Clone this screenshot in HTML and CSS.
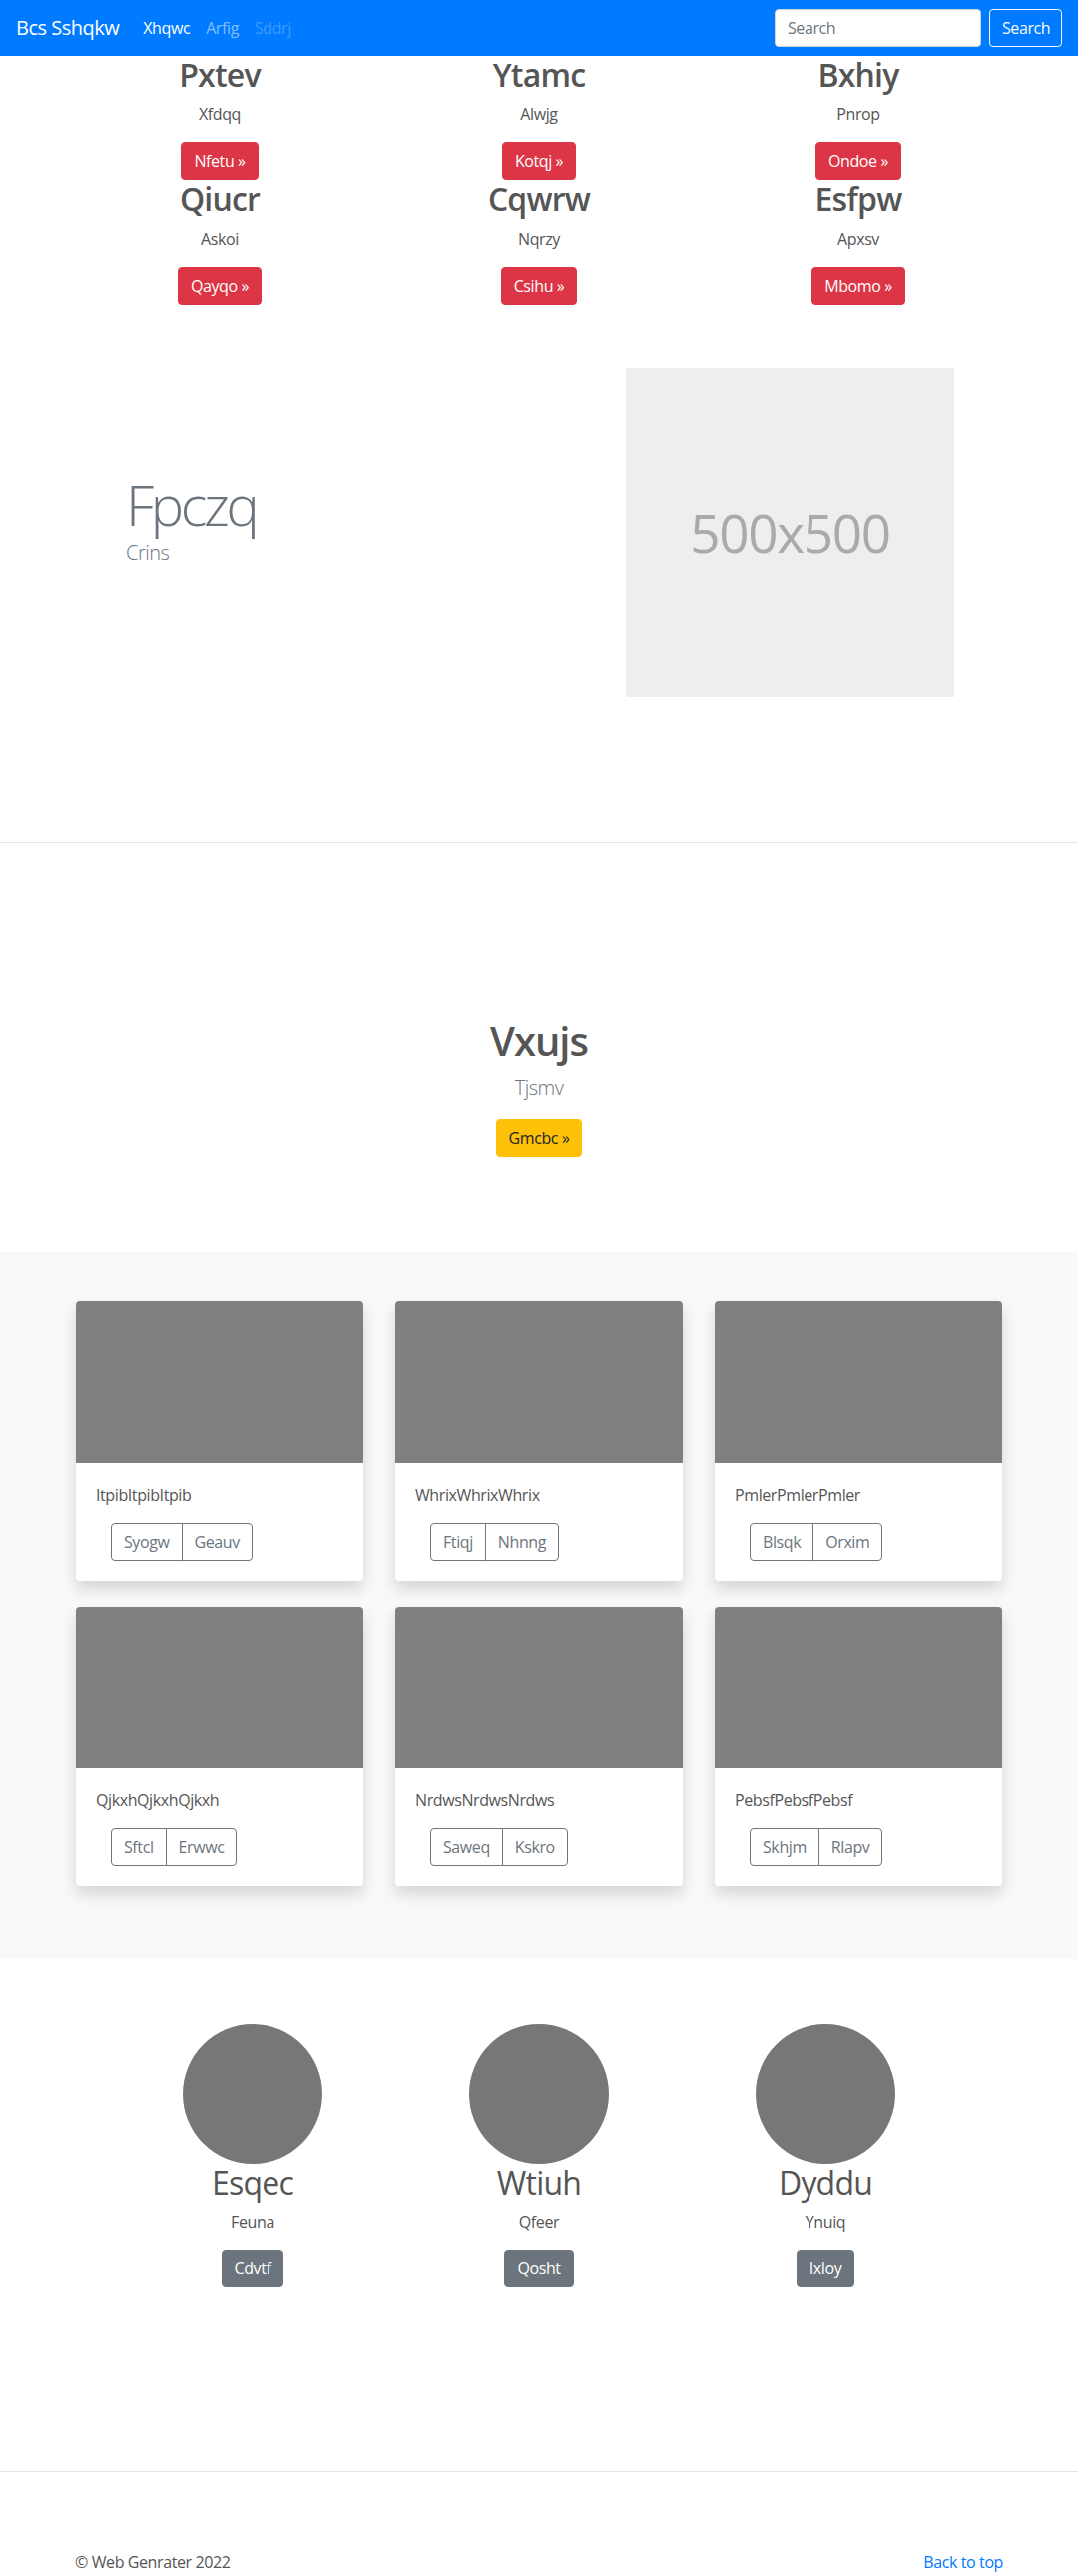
FILE: index.html
```html
<!DOCTYPE html>
<html lang="en">
<head>
<meta charset="utf-8">
<title>Bcs Sshqkw</title>
<link rel="stylesheet" href="styles.css">
</head>
<body>
<nav class="navbar">
  <a class="brand" href="#">Bcs Sshqkw</a>
  <ul class="nav-links">
    <li><a class="nav-link active" href="#">Xhqwc</a></li>
    <li><a class="nav-link" href="#">Arfig</a></li>
    <li><a class="nav-link disabled" href="#">Sddrj</a></li>
  </ul>
  <form class="search-form">
    <input class="search-input" type="text" placeholder="Search">
    <button class="btn btn-outline-light" type="button">Search</button>
  </form>
</nav>

<section class="features">
  <div class="feature"><h2>Pxtev</h2><p>Xfdqq</p><a class="btn btn-danger" href="#">Nfetu &raquo;</a></div>
  <div class="feature"><h2>Ytamc</h2><p>Alwjg</p><a class="btn btn-danger" href="#">Kotqj &raquo;</a></div>
  <div class="feature"><h2>Bxhiy</h2><p>Pnrop</p><a class="btn btn-danger" href="#">Ondoe &raquo;</a></div>
  <div class="feature"><h2>Qiucr</h2><p>Askoi</p><a class="btn btn-danger" href="#">Qayqo &raquo;</a></div>
  <div class="feature"><h2>Cqwrw</h2><p>Nqrzy</p><a class="btn btn-danger" href="#">Csihu &raquo;</a></div>
  <div class="feature"><h2>Esfpw</h2><p>Apxsv</p><a class="btn btn-danger" href="#">Mbomo &raquo;</a></div>
</section>

<section class="hero">
  <div class="hero-text">
    <h1 class="display">Fpczq</h1>
    <p class="lead muted">Crins</p>
  </div>
  <div class="placeholder">500x500</div>
</section>

<hr class="divider">

<section class="cta">
  <h1>Vxujs</h1>
  <p class="lead muted">Tjsmv</p>
  <a class="btn btn-warning" href="#">Gmcbc &raquo;</a>
</section>

<section class="album">
  <div class="cards">
    <div class="card"><div class="card-img"></div><div class="card-body"><p>ItpibItpibItpib</p><div class="btn-group"><a class="btn btn-outline" href="#">Syogw</a><a class="btn btn-outline" href="#">Geauv</a></div></div></div>
    <div class="card"><div class="card-img"></div><div class="card-body"><p>WhrixWhrixWhrix</p><div class="btn-group"><a class="btn btn-outline" href="#">Ftiqj</a><a class="btn btn-outline" href="#">Nhnng</a></div></div></div>
    <div class="card"><div class="card-img"></div><div class="card-body"><p>PmlerPmlerPmler</p><div class="btn-group"><a class="btn btn-outline" href="#">Blsqk</a><a class="btn btn-outline" href="#">Orxim</a></div></div></div>
    <div class="card"><div class="card-img"></div><div class="card-body"><p>QjkxhQjkxhQjkxh</p><div class="btn-group"><a class="btn btn-outline" href="#">Sftcl</a><a class="btn btn-outline" href="#">Erwwc</a></div></div></div>
    <div class="card"><div class="card-img"></div><div class="card-body"><p>NrdwsNrdwsNrdws</p><div class="btn-group"><a class="btn btn-outline" href="#">Saweq</a><a class="btn btn-outline" href="#">Kskro</a></div></div></div>
    <div class="card"><div class="card-img"></div><div class="card-body"><p>PebsfPebsfPebsf</p><div class="btn-group"><a class="btn btn-outline" href="#">Skhjm</a><a class="btn btn-outline" href="#">Rlapv</a></div></div></div>
  </div>
</section>

<section class="team">
  <div class="member"><div class="avatar"></div><h2>Esqec</h2><p>Feuna</p><a class="btn btn-secondary" href="#">Cdvtf</a></div>
  <div class="member"><div class="avatar"></div><h2>Wtiuh</h2><p>Qfeer</p><a class="btn btn-secondary" href="#">Qosht</a></div>
  <div class="member"><div class="avatar"></div><h2>Dyddu</h2><p>Ynuiq</p><a class="btn btn-secondary" href="#">Ixloy</a></div>
</section>

<hr class="divider">

<footer class="footer">
  <p>&copy; Web Genrater 2022</p>
  <a href="#">Back to top</a>
</footer>
</body>
</html>
```

FILE: styles.css
```css
* {
  box-sizing: border-box;
  letter-spacing: -0.025em;
}

html, body {
  margin: 0;
  padding: 0;
}

body {
  font-family: "Open Sans", "Noto Sans", "Liberation Sans", sans-serif;
  font-size: 16px;
  line-height: 1.5;
  color: #555;
  background: #fff;
}

a { text-decoration: none; }

h1, h2, p { margin: 0; }

/* Navbar */
.navbar {
  height: 56px;
  background: #007bff;
  display: flex;
  align-items: center;
  padding: 0 16px;
}

.brand {
  color: #fff;
  font-size: 20px;
  line-height: 30px;
  margin-right: 16px;
}

.nav-links {
  list-style: none;
  margin: 0;
  padding: 0;
  display: flex;
  flex: 1;
}

.nav-link {
  display: block;
  padding: 8px 8px;
  color: rgba(255, 255, 255, 0.5);
}

.nav-link.active { color: #fff; }
.nav-link.disabled { color: rgba(255, 255, 255, 0.25); }

.search-form {
  display: flex;
  align-items: center;
}

.search-input {
  width: 207px;
  height: 38px;
  padding: 6px 12px;
  border: 1px solid #ced4da;
  border-radius: 4px;
  font-family: inherit;
  font-size: 16px;
  color: #495057;
  margin-right: 8px;
}

.search-input::placeholder { color: #6c757d; }

/* Buttons */
.btn {
  display: inline-block;
  height: 38px;
  padding: 6px 12px;
  border: 1px solid transparent;
  border-radius: 4px;
  font-family: inherit;
  font-size: 16px;
  line-height: 24px;
  text-align: center;
  cursor: pointer;
  white-space: nowrap;
}

.btn-outline-light {
  background: transparent;
  border-color: #f8f9fa;
  color: #f8f9fa;
  width: 73px;
}

.btn-danger { background: #dc3545; border-color: #dc3545; color: #fff; }
.btn-warning { background: #ffc107; border-color: #ffc107; color: #212529; }
.btn-secondary { background: #6c757d; border-color: #6c757d; color: #fff; }
.btn-outline { background: #fff; border-color: #6c757d; color: #6c757d; }

/* Features */
.features {
  width: 960px;
  margin: 0 auto;
  display: grid;
  grid-template-columns: repeat(3, 1fr);
}

.feature {
  text-align: center;
  padding: 0 15px;
}

.feature h2 {
  font-size: 32px;
  font-weight: 600;
  line-height: 1.2;
  margin-bottom: 8px;
}

.feature p { margin-bottom: 16px; }

/* Hero */
.hero {
  width: 960px;
  margin: 0 auto;
  display: flex;
  align-items: flex-start;
  padding: 64px 0 145px;
}

.hero-text {
  flex: 1;
  padding-left: 66px;
  margin-top: 103px;
}

.display {
  font-size: 56px;
  font-weight: 300;
  line-height: 1.2;
  color: #6c757d;
  letter-spacing: -0.06em;
}

.lead {
  font-size: 20px;
  font-weight: 300;
  line-height: 1.5;
}

.muted { color: #6c757d; }

.placeholder {
  width: 329px;
  height: 329px;
  margin-right: 64px;
  background: #eee;
  color: #aaa;
  font-size: 53px;
  display: flex;
  align-items: center;
  justify-content: center;
}

.divider {
  margin: 0;
  border: 0;
  border-top: 1px solid rgba(0, 0, 0, 0.1);
}

/* CTA */
.cta {
  text-align: center;
  padding: 175px 0 95px;
}

.cta h1 {
  font-size: 40px;
  font-weight: 600;
  line-height: 1.2;
  margin-bottom: 8px;
}

.cta .lead { margin-bottom: 16px; }

/* Album */
.album {
  background: #f8f9fa;
  padding: 49px 0 73px;
}

.cards {
  display: grid;
  grid-template-columns: repeat(3, 288px);
  column-gap: 32px;
  row-gap: 26px;
  justify-content: center;
}

.card {
  background: #fff;
  border-radius: 4px;
  overflow: hidden;
  box-shadow: 0 8px 16px rgba(0, 0, 0, 0.15);
}

.card-img {
  height: 162px;
  background: #808080;
}

.card-body { padding: 20px; }

.card-body p { margin-bottom: 16px; }

.btn-group {
  display: inline-flex;
  margin-left: 15px;
}

.btn-group .btn:first-child {
  border-top-right-radius: 0;
  border-bottom-right-radius: 0;
}

.btn-group .btn + .btn {
  margin-left: -1px;
  border-top-left-radius: 0;
  border-bottom-left-radius: 0;
}

/* Team */
.team {
  display: grid;
  grid-template-columns: repeat(3, 287px);
  justify-content: center;
  padding: 65px 0 184px;
}

.member { text-align: center; }

.avatar {
  width: 140px;
  height: 140px;
  border-radius: 50%;
  background: #777;
  margin: 0 auto;
}

.member h2 {
  font-size: 32px;
  font-weight: 400;
  line-height: 1.2;
  margin-bottom: 8px;
}

.member p { margin-bottom: 16px; }

/* Footer */
.footer {
  width: 960px;
  margin: 0 auto;
  padding: 78px 15px 48px;
  display: flex;
  justify-content: space-between;
}

.footer a { color: #007bff; }
```
